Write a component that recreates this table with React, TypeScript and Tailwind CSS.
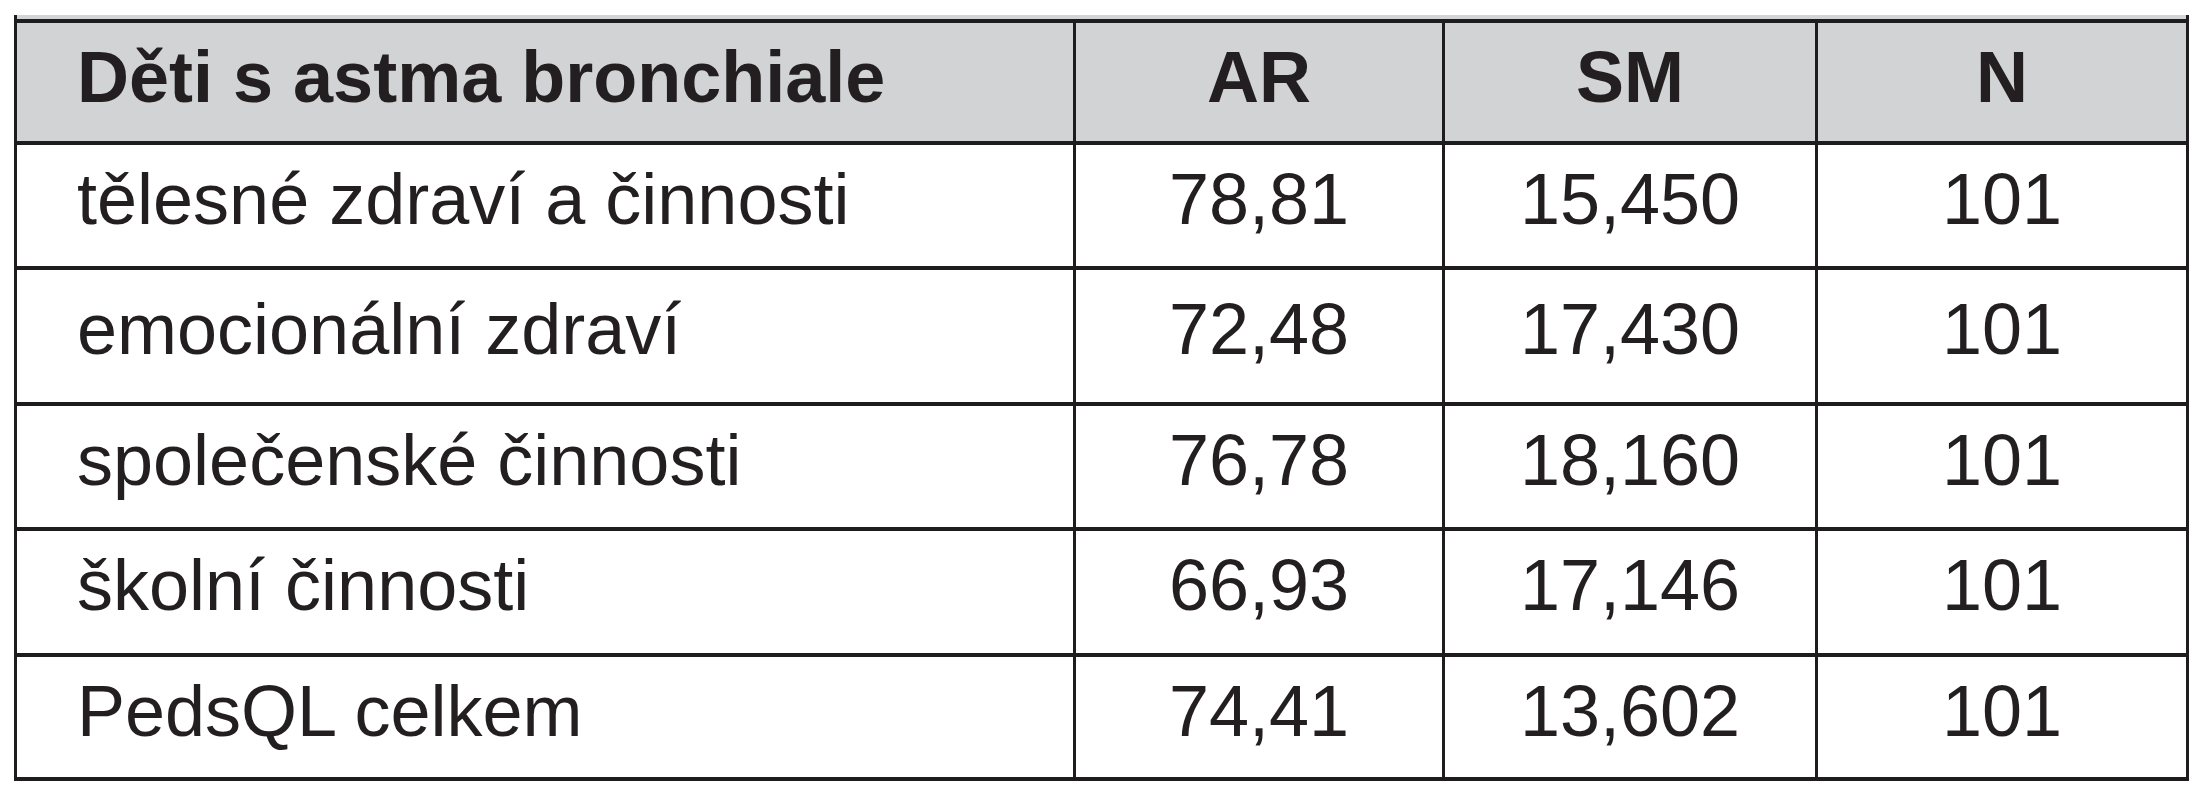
import React from 'react';

interface Row {
  label: string;
  ar: string;
  sm: string;
  n: string;
  height: string;
}

const rows: Row[] = [
  { label: 'tělesné zdraví a činnosti', ar: '78,81', sm: '15,450', n: '101', height: 'h-[125px]' },
  { label: 'emocionální zdraví', ar: '72,48', sm: '17,430', n: '101', height: 'h-[136px]' },
  { label: 'společenské činnosti', ar: '76,78', sm: '18,160', n: '101', height: 'h-[125px]' },
  { label: 'školní činnosti', ar: '66,93', sm: '17,146', n: '101', height: 'h-[126px]' },
  { label: 'PedsQL celkem', ar: '74,41', sm: '13,602', n: '101', height: 'h-[124px]' },
];

const gridCols = 'grid grid-cols-[1056px_369px_373px_371px]';

export default function App() {
  return (
    <div
      className="min-h-[800px] w-[2201px] bg-white pt-[15px] pl-[14px] text-[#231f20]"
      style={{ fontFamily: '"Liberation Sans", Arial, sans-serif' }}
    >
      <div className="w-[2175px] border-x-[3px] border-b-[4px] border-[#1f1c1d]">
        {/* light band above the top rule */}
        <div className="h-[4px] bg-[#d3d4d6]" />

        <div className={`${gridCols} h-[122px] border-t-[4px] border-[#1f1c1d] bg-[#d1d3d4] text-[72px] font-bold`}>
          <div className="flex items-center pl-[60px] pb-[18px]">Děti s astma bronchiale</div>
          <div className="flex items-center justify-center border-l-[3px] border-[#1f1c1d] pb-[18px]">AR</div>
          <div className="flex items-center justify-center border-l-[3px] border-[#1f1c1d] pb-[18px]">SM</div>
          <div className="flex items-center justify-center border-l-[3px] border-[#1f1c1d] pb-[18px]">N</div>
        </div>

        {rows.map((row) => (
          <div
            key={row.label}
            className={`${gridCols} ${row.height} border-t-[4px] border-[#1f1c1d] text-[72px]`}
          >
            <div className="flex items-center pl-[60px] pb-[14px]">{row.label}</div>
            <div className="flex items-center justify-center border-l-[3px] border-[#1f1c1d] pb-[14px]">{row.ar}</div>
            <div className="flex items-center justify-center border-l-[3px] border-[#1f1c1d] pb-[14px]">{row.sm}</div>
            <div className="flex items-center justify-center border-l-[3px] border-[#1f1c1d] pb-[14px]">{row.n}</div>
          </div>
        ))}
      </div>
    </div>
  );
}
